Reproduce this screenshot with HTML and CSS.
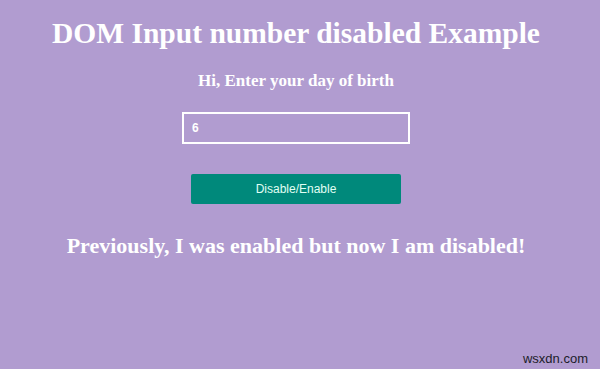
FILE: index.html
```html
<!DOCTYPE html>
<html lang="en">
  <head>
    <meta charset="UTF-8" />
    <title>DOM Input number disabled</title>
    <link rel="stylesheet" href="styles.css">
  </head>
  <body>
    <div class="container">
      <h1 class="title">DOM Input number disabled Example</h1>
      <h3 class="subtitle">Hi, Enter your day of birth</h3>
      <input id="day" class="day" type="number" value="6" />
      <button id="btn" class="btn">Disable/Enable</button>
      <h2 id="msg" class="msg">Previously, I was enabled but now I am disabled!</h2>
    </div>
    <span class="mark">wsxdn.com</span>
  </body>
</html>
```

FILE: styles.css
```css
body {
  margin: 0;
  background-color: #b19cd0;
  font-family: "Liberation Serif", "Times New Roman", serif;
  color: white;
  height: 369px;
  overflow: hidden;
}
.container {
  width: 592px;
  text-align: center;
}
.title {
  font-size: 29.5px;
  line-height: 34px;
  margin: 0;
  padding-top: 16px;
}
.subtitle {
  font-size: 17px;
  line-height: 20px;
  margin: 21px 0 0 0;
}
.day {
  display: block;
  box-sizing: border-box;
  width: 228px;
  height: 32px;
  margin: 21px auto 0 auto;
  padding: 0 8px;
  background: transparent;
  border: 2px solid white;
  color: white;
  font-family: "Liberation Sans", Arial, sans-serif;
  font-weight: bold;
  font-size: 12px;
  outline: none;
}
.btn {
  display: block;
  width: 210px;
  height: 30px;
  margin: 30px auto 0 auto;
  background: #00897b;
  color: #e0fff4;
  border: none;
  border-radius: 2px;
  font-family: "Liberation Sans", Arial, sans-serif;
  font-size: 12px;
}
.msg {
  font-size: 22px;
  line-height: 26px;
  margin: 29px 0 0 0;
}
.mark {
  position: absolute;
  right: 12px;
  bottom: 3px;
  color: #1c1c2a;
  font-family: "Liberation Sans", Arial, sans-serif;
  font-size: 13px;
}
```
